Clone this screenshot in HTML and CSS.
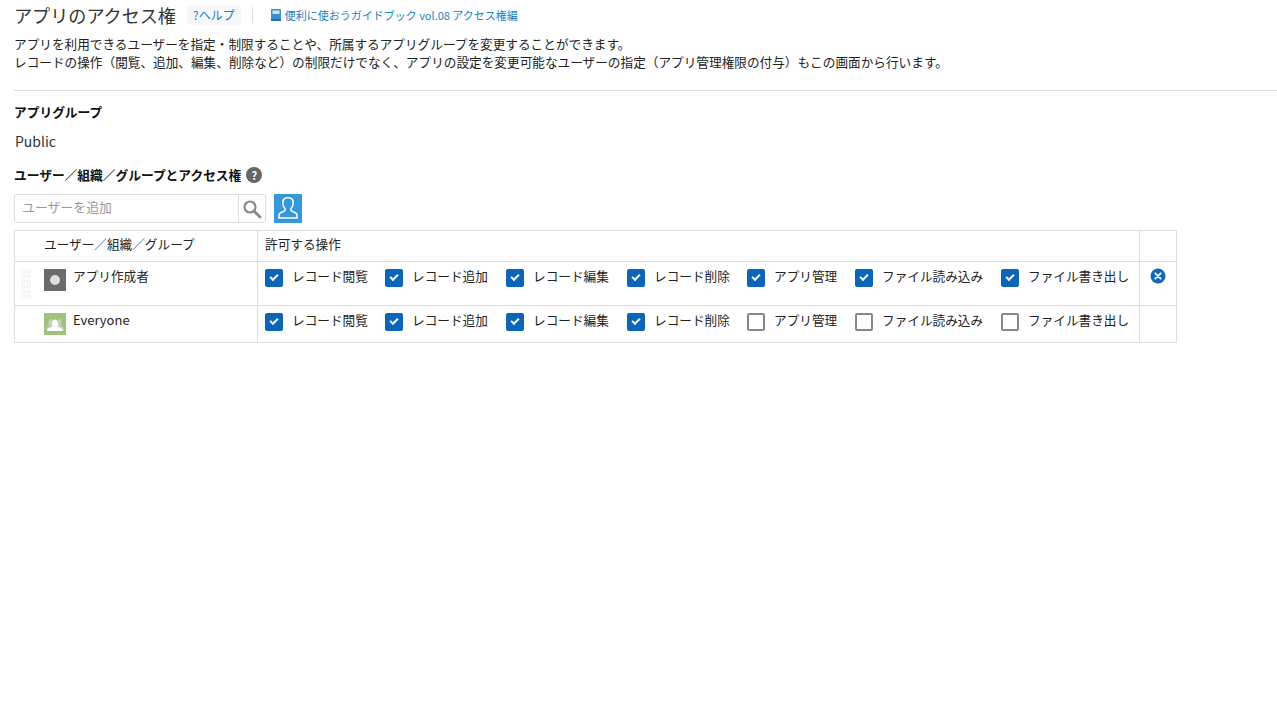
FILE: index.html
```html
<!DOCTYPE html>
<html lang="ja">
<head>
    <meta charset="UTF-8">
    <title>アプリのアクセス権</title>
    <link rel="stylesheet" href="styles.css">
</head>
<body>

<div class="title-row">
    <h1 class="page-title">アプリのアクセス権</h1>
    <a class="help-link">?ヘルプ</a>
    <span class="title-sep"></span>
    <a class="guide-link">
        <svg class="book-icon" viewBox="0 0 10 12" width="10" height="12"><rect width="10" height="12" rx="1" fill="#3a8fd0"/><rect x="1.500" y="1.500" width="7" height="3.500" fill="#cfe4f5"/><rect y="10" width="10" height="2" fill="#1d6fb0"/></svg>
        便利に使おうガイドブック vol.08 アクセス権編
    </a>
</div>

<p class="description">アプリを利用できるユーザーを指定・制限することや、所属するアプリグループを変更することができます。<br>レコードの操作（閲覧、追加、編集、削除など）の制限だけでなく、アプリの設定を変更可能なユーザーの指定（アプリ管理権限の付与）もこの画面から行います。</p>

<hr class="divider">

<h2 class="section-label">アプリグループ</h2>
<div class="group-value">Public</div>

<h2 class="section-label access-label">ユーザー／組織／グループとアクセス権
    <span class="hint-icon">?</span>
</h2>

<div class="user-search">
    <div class="search-box">
        <span class="search-input">ユーザーを追加</span>
        <span class="search-btn">
            <svg viewBox="0 0 20 20" width="20" height="20"><circle cx="8" cy="8" r="5.500" fill="none" stroke="#888" stroke-width="2.200"/><path d="M12 12l6 6" stroke="#888" stroke-width="2.800" stroke-linecap="round"/></svg>
        </span>
    </div>
    <span class="picker-btn">
        <svg viewBox="0 0 28 28" width="28" height="28"><path d="M5 24v-2.500c0-2 1.500-3 4-3.800 2-.7 2.500-1.500 2-3-1.500-1.500-2.200-3.500-2.200-6 0-3 2-5 5.200-5s5.200 2 5.200 5c0 2.500-.7 4.500-2.200 6-.5 1.500 0 2.300 2 3 2.500.8 4 1.800 4 3.800V24z" fill="none" stroke="#fff" stroke-width="1.500"/></svg>
    </span>
</div>

<table class="access-table">
    <tr class="head-row">
        <th class="col-user">ユーザー／組織／グループ</th>
        <th class="col-perm">許可する操作</th>
        <th class="col-del"></th>
    </tr>
    <tr class="row-creator">
        <td class="col-user">
            <div class="entity">
                <span class="grip"></span>
                <span class="avatar avatar-gray"><i></i></span>
                <span class="entity-name">アプリ作成者</span>
            </div>
        </td>
        <td class="col-perm">
            <div class="perms">
                <label class="perm perm-1"><span class="box on"></span>レコード閲覧</label>
                <label class="perm perm-2"><span class="box on"></span>レコード追加</label>
                <label class="perm perm-3"><span class="box on"></span>レコード編集</label>
                <label class="perm perm-4"><span class="box on"></span>レコード削除</label>
                <label class="perm perm-5"><span class="box on"></span>アプリ管理</label>
                <label class="perm perm-6"><span class="box on"></span>ファイル読み込み</label>
                <label class="perm perm-7"><span class="box on"></span>ファイル書き出し</label>
            </div>
        </td>
        <td class="col-del">
            <svg class="remove-icon" viewBox="0 0 16 16" width="16" height="16"><circle cx="8" cy="8" r="7.500" fill="#0f68c0"/><path d="M5.300 5.300l5.400 5.400M10.700 5.300l-5.400 5.400" stroke="#fff" stroke-width="1.800" stroke-linecap="round"/></svg>
        </td>
    </tr>
    <tr class="row-everyone">
        <td class="col-user">
            <div class="entity">
                <span class="grip grip-none"></span>
                <span class="avatar avatar-green">
                    <svg viewBox="0 0 22 22" width="22" height="22"><path d="M2 17c0-2 1-3.500 3-4C4 11 4 6 6.500 6S9 11 8 12.500L9 17zM20 17c0-2-1-3.500-3-4 1-2 1-7-1.500-7S13 11 14 12.500L13 17z" fill="#c4cfba"/><path d="M3 18c0-2.500 3-3.500 5.500-4.500-1-1.500-1.200-7 2.500-7s3.500 5.500 2.500 7c2.500 1 5.500 2 5.500 4.500z" fill="#fff"/></svg>
                </span>
                <span class="entity-name latin-name">Everyone</span>
            </div>
        </td>
        <td class="col-perm">
            <div class="perms">
                <label class="perm perm-1"><span class="box on"></span>レコード閲覧</label>
                <label class="perm perm-2"><span class="box on"></span>レコード追加</label>
                <label class="perm perm-3"><span class="box on"></span>レコード編集</label>
                <label class="perm perm-4"><span class="box on"></span>レコード削除</label>
                <label class="perm perm-5"><span class="box"></span>アプリ管理</label>
                <label class="perm perm-6"><span class="box"></span>ファイル読み込み</label>
                <label class="perm perm-7"><span class="box"></span>ファイル書き出し</label>
            </div>
        </td>
        <td class="col-del"></td>
    </tr>
</table>

</body>
</html>
```

FILE: styles.css
```css
html, body {
    margin: 0;
    padding: 0;
}

body {
    padding: 0 0 0 14px;
    font-family: "Noto Sans CJK JP", "Noto Sans", sans-serif;
    font-size: 12.650px;
    line-height: 18px;
    color: #222;
    background-color: #fff;
}

.title-row {
    display: flex;
    align-items: center;
    height: 30px;
}

.page-title {
    margin: 0;
    font-size: 18.100px;
    font-weight: normal;
    color: #333;
    width: 173px;
}

.help-link {
    padding: 0 6px;
    height: 20px;
    line-height: 20px;
    font-size: 12px;
    color: #1b7fc4;
    background-color: #f6f7f9;
    border-radius: 4px;
}

.title-sep {
    width: 1px;
    height: 16px;
    margin: 0 18px 0 11px;
    background-color: #ddd;
}

.guide-link {
    display: flex;
    align-items: center;
    gap: 4px;
    font-size: 11px;
    color: #1b7fc4;
}

.description {
    margin: 5px 0 0;
    height: 55px;
    line-height: 18px;
}

.divider {
    margin: 0;
    border: none;
    border-top: 1px solid #ddd;
}

.section-label {
    margin: 12px 0 0;
    font-size: 12.720px;
    font-weight: bold;
    line-height: 18px;
    color: #111;
}

.group-value {
    margin-top: 11px;
    padding-left: 1px;
    font-size: 14px;
    line-height: 18px;
    color: #333;
}

.access-label {
    display: flex;
    align-items: center;
    gap: 5px;
    margin-top: 16px;
}

.hint-icon {
    width: 16px;
    height: 16px;
    border-radius: 50%;
    background-color: #666;
    color: #fff;
    font-size: 11px;
    line-height: 16px;
    text-align: center;
}

.user-search {
    display: flex;
    gap: 8px;
    margin-top: 10px;
}

.search-box {
    display: flex;
    width: 250px;
    height: 27px;
    border: 1px solid #ddd;
    border-radius: 3px;
}

.search-input {
    flex: 1;
    padding-left: 7px;
    line-height: 24px;
    font-size: 12.900px;
    color: #999;
}

.search-btn {
    display: flex;
    align-items: center;
    justify-content: center;
    width: 26px;
    border-left: 1px solid #ddd;
}

.picker-btn {
    width: 28px;
    height: 29px;
    background-color: #3498db;
}

.access-table {
    margin-top: 7px;
    width: 1163px;
    border-collapse: collapse;
    table-layout: fixed;
}

.access-table th,
.access-table td {
    box-sizing: border-box;
    border: 1px solid #ddd;
    padding: 0;
    font-weight: normal;
    text-align: left;
    vertical-align: top;
}

.head-row {
    height: 31px;
}

.access-table .head-row th {
    vertical-align: middle;
    padding: 0 0 4px 7px;
}

.access-table .head-row .col-user {
    padding-left: 29px;
}

.col-user {
    width: 243px;
}

.col-del {
    width: 37px;
}

.row-creator {
    height: 44px;
}

.row-everyone {
    height: 37px;
}

.entity {
    display: flex;
    align-items: flex-start;
    padding: 7px 0 0 6px;
}

.grip {
    width: 10px;
    height: 30px;
    margin-right: 13px;
    background-image: radial-gradient(circle at 2.500px 2.500px, transparent 1px, #e2e2e2 1.500px, transparent 2.300px);
    background-size: 5px 5px;
}

.grip-none {
    height: 22px;
    background-image: none;
}

.avatar {
    display: block;
    flex: none;
    width: 22px;
    height: 22px;
    margin-right: 7px;
}

.avatar-gray {
    display: flex;
    align-items: center;
    justify-content: center;
    background-color: #6b6b6b;
}

.avatar-gray i {
    width: 10px;
    height: 10px;
    border-radius: 50%;
    background-color: #ddd;
}

.avatar-green {
    background-color: #9fc37c;
}

.entity-name {
    line-height: 14px;
}

.latin-name {
    font-size: 13px;
}

.perms {
    display: flex;
    padding: 7px 0 0 7px;
}

.perm {
    display: flex;
    flex: none;
    line-height: 14px;
}

.perm-1 { width: 120px; }
.perm-2 { width: 121px; }
.perm-3 { width: 121px; }
.perm-4 { width: 120px; }
.perm-5 { width: 108px; }
.perm-6 { width: 146px; }

.box {
    flex: none;
    position: relative;
    width: 14px;
    height: 14px;
    margin: 0 9px 0 0;
    border: 2px solid #888;
    border-radius: 2px;
}

.box.on {
    border-color: #0b66bb;
    background-color: #0b66bb;
}

.box.on::after {
    content: "";
    position: absolute;
    left: 3px;
    top: 3px;
    width: 6px;
    height: 3px;
    border-left: 2px solid #fff;
    border-bottom: 2px solid #fff;
    transform: rotate(-45deg);
}

.remove-icon {
    display: block;
    margin: 6px 0 0 10px;
}
```
